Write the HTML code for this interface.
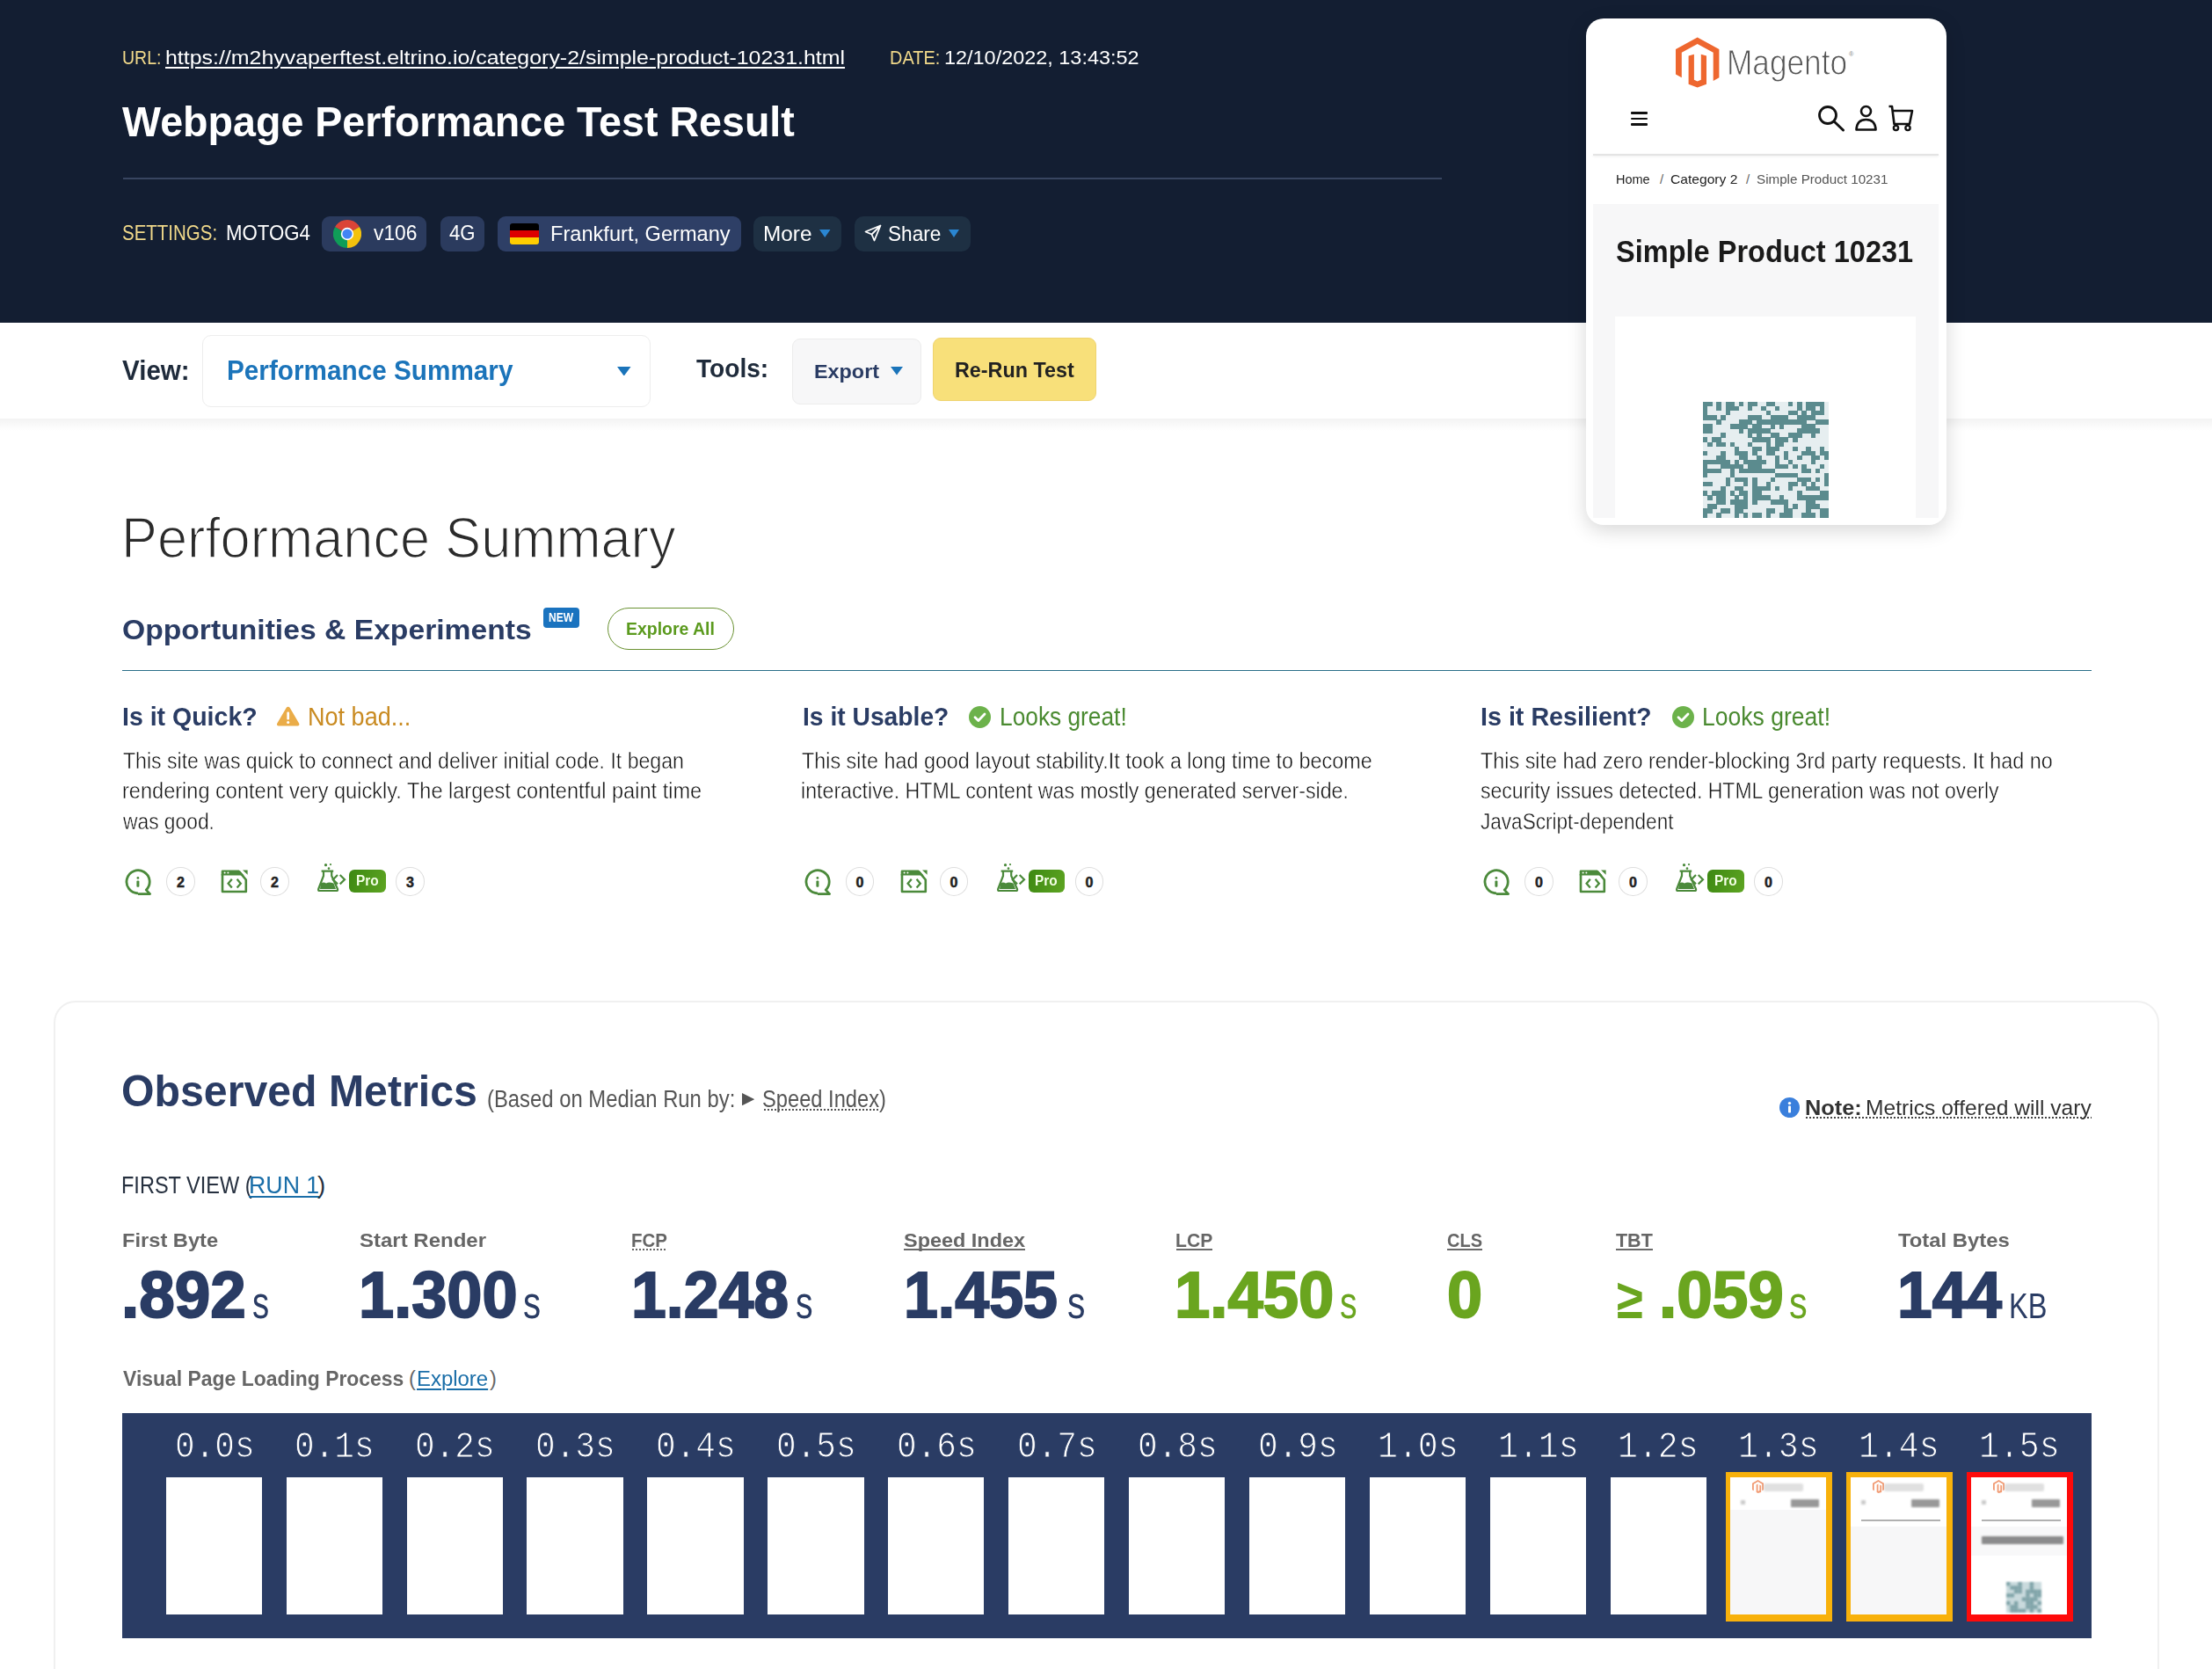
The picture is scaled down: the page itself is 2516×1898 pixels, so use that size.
<!DOCTYPE html>
<html><head><meta charset="utf-8"><title>WebPageTest Result</title>
<style>
html,body{margin:0;padding:0;}
body{width:2516px;height:1898px;overflow:hidden;position:relative;background:#fff;font-family:"Liberation Sans",sans-serif;}
.t{position:absolute;white-space:pre;line-height:1;transform-origin:0 0;}
.a{position:absolute;}
</style></head><body>
<div class="a" style="left:0.00px;top:0.00px;width:2516.00px;height:366.50px;background:#131e32;"></div>
<div class="a" style="left:139.50px;top:202.00px;width:1500.50px;height:2.00px;background:#384560;"></div>
<div class="a" style="left:366.00px;top:245.50px;width:118.50px;height:40.00px;background:#2b3b5e;border-radius:9px;"></div>
<div class="a" style="left:500.50px;top:245.50px;width:50.50px;height:40.00px;background:#2b3b5e;border-radius:9px;"></div>
<div class="a" style="left:565.50px;top:245.50px;width:277.50px;height:40.00px;background:#2e3f66;border-radius:9px;"></div>
<div class="a" style="left:857.00px;top:245.50px;width:100.00px;height:40.00px;background:#1e3043;border-radius:10px;"></div>
<div class="a" style="left:972.00px;top:245.50px;width:132.00px;height:40.00px;background:#1e3043;border-radius:10px;"></div>
<svg class="a" style="left:379px;top:250px" width="32" height="32" viewBox="0 0 32 32">
<path d="M16 16 L16 0 A16 16 0 0 1 29.86 8 Z" fill="#db4437"/>
<path d="M16 16 L29.86 8 A16 16 0 0 1 16 32 Z" fill="#f4c20d"/>
<path d="M16 16 L16 32 A16 16 0 0 1 2.14 8 Z" fill="#0f9d58"/>
<path d="M16 16 L2.14 8 A16 16 0 0 1 16 0 Z" fill="#db4437"/>
<circle cx="16" cy="16" r="7.2" fill="#fff"/><circle cx="16" cy="16" r="5.6" fill="#4285f4"/></svg>
<div class="a" style="left:580px;top:254px;width:33px;height:23.5px;border-radius:3px;overflow:hidden;background:linear-gradient(#000 0 33.3%,#dd0000 33.3% 66.6%,#ffce00 66.6%);"></div>
<svg class="a" style="left:932.00px;top:261.00px" width="12.50" height="9.00" viewBox="0 0 10 10" preserveAspectRatio="none"><path d="M0 0H10L5 10Z" fill="#2a86d2"/></svg>
<svg class="a" style="left:1079.00px;top:261.00px" width="12.00" height="9.00" viewBox="0 0 10 10" preserveAspectRatio="none"><path d="M0 0H10L5 10Z" fill="#2a86d2"/></svg>
<svg class="a" style="left:983px;top:255px" width="20" height="20" viewBox="0 0 20 20"><path d="M18.5 1.5 L1.5 8.5 L8.5 11.5 L11.5 18.5 Z M18.5 1.5 L8.5 11.5" fill="none" stroke="#fff" stroke-width="1.8" stroke-linejoin="round"/></svg>
<div class="a" style="left:0.00px;top:476.00px;width:2516.00px;height:14.00px;background:linear-gradient(#f3f3f3,#fff);"></div>
<div class="a" style="left:230.00px;top:380.70px;width:510.00px;height:82.30px;border:1.5px solid #ededed;border-radius:10px;box-sizing:border-box;"></div>
<svg class="a" style="left:702.00px;top:416.70px" width="15.50" height="10.60" viewBox="0 0 10 10" preserveAspectRatio="none"><path d="M0 0H10L5 10Z" fill="#1b74ba"/></svg>
<div class="a" style="left:901.00px;top:384.50px;width:147.00px;height:75.50px;background:#f7f7f8;border:1px solid #ececec;border-radius:9px;box-sizing:border-box;"></div>
<svg class="a" style="left:1013.00px;top:417.20px" width="14.00" height="9.50" viewBox="0 0 10 10" preserveAspectRatio="none"><path d="M0 0H10L5 10Z" fill="#1b74ba"/></svg>
<div class="a" style="left:1061.00px;top:384.00px;width:186.00px;height:72.00px;background:#f8e07a;border:1px solid #efd470;border-radius:9px;box-sizing:border-box;"></div>
<div class="a" style="left:1804.00px;top:21.00px;width:410.00px;height:575.50px;background:#fff;border-radius:20px;box-shadow:0 6px 22px rgba(0,0,0,0.16);"></div>
<div class="a" style="left:1812.00px;top:29.00px;width:394.00px;height:559.50px;background:#fff;border-radius:16px 16px 0 0;"></div>
<svg class="a" style="left:1905px;top:42px" width="51" height="58" viewBox="0 0 51 58">
<path d="M25.7 0.5 L50.4 14 V46.3 L43.7 50 V17.7 L25.7 8.1 L7.8 17.7 V46.3 L1 42.5 V14 Z" fill="#ee672f"/>
<path d="M15.6 21.5 L21.9 19.8 V48.8 L25.7 50.6 L29.8 48.8 V19.8 L36 21.5 V53.8 L25.7 57.4 L15.6 53.8 Z" fill="#ee672f"/>
</svg>
<div class="a" style="left:1854.60px;top:127.00px;width:19.90px;height:2.60px;background:#111;border-radius:1px;"></div>
<div class="a" style="left:1854.60px;top:133.50px;width:19.90px;height:2.60px;background:#111;border-radius:1px;"></div>
<div class="a" style="left:1854.60px;top:140.00px;width:19.90px;height:2.60px;background:#111;border-radius:1px;"></div>
<svg class="a" style="left:2066px;top:118px" width="116" height="32" viewBox="0 0 116 32">
<circle cx="13" cy="13" r="9.5" fill="none" stroke="#111" stroke-width="2.8"/><path d="M20 20 L30.5 30" stroke="#111" stroke-width="3" stroke-linecap="round"/>
<circle cx="56.5" cy="8.5" r="5.5" fill="none" stroke="#111" stroke-width="2.6"/><path d="M45.5 29.5 Q46 18 56.5 18 Q67 18 67.5 29.5 Z" fill="none" stroke="#111" stroke-width="2.6" stroke-linejoin="round"/>
<path d="M82.5 3 H86 L88.5 23 H106 L109 8 H87" fill="none" stroke="#111" stroke-width="2.6" stroke-linejoin="round"/><circle cx="90.5" cy="27.5" r="2.6" fill="none" stroke="#111" stroke-width="2.4"/><circle cx="104" cy="27.5" r="2.6" fill="none" stroke="#111" stroke-width="2.4"/>
</svg>
<div class="a" style="left:1812.00px;top:174.50px;width:393.00px;height:2.50px;background:#e4e4e4;box-shadow:0 1px 3px rgba(0,0,0,0.08);"></div>
<div class="a" style="left:1812.00px;top:232.00px;width:393.00px;height:356.50px;background:#f7f7f8;"></div>
<div class="a" style="left:1837.00px;top:360.00px;width:342.00px;height:228.50px;background:#fff;"></div>
<svg class="a" style="left:1937px;top:457px" width="143" height="131.5" viewBox="0 0 143 131.5" shape-rendering="crispEdges"><rect width="143" height="131.5" fill="#e6eef0"/><g fill="#5b8b8e"><rect x="0.00" y="0.00" width="5.41" height="5.36"/><rect x="5.11" y="0.00" width="5.41" height="5.36"/><rect x="15.32" y="0.00" width="5.41" height="5.36"/><rect x="25.54" y="0.00" width="5.41" height="5.36"/><rect x="30.64" y="0.00" width="5.41" height="5.36"/><rect x="40.86" y="0.00" width="5.41" height="5.36"/><rect x="51.07" y="0.00" width="5.41" height="5.36"/><rect x="56.18" y="0.00" width="5.41" height="5.36"/><rect x="71.50" y="0.00" width="5.41" height="5.36"/><rect x="76.61" y="0.00" width="5.41" height="5.36"/><rect x="97.04" y="0.00" width="5.41" height="5.36"/><rect x="107.25" y="0.00" width="5.41" height="5.36"/><rect x="117.46" y="0.00" width="5.41" height="5.36"/><rect x="122.57" y="0.00" width="5.41" height="5.36"/><rect x="127.68" y="0.00" width="5.41" height="5.36"/><rect x="132.79" y="0.00" width="5.41" height="5.36"/><rect x="0.00" y="5.06" width="5.41" height="5.36"/><rect x="15.32" y="5.06" width="5.41" height="5.36"/><rect x="25.54" y="5.06" width="5.41" height="5.36"/><rect x="30.64" y="5.06" width="5.41" height="5.36"/><rect x="35.75" y="5.06" width="5.41" height="5.36"/><rect x="51.07" y="5.06" width="5.41" height="5.36"/><rect x="66.39" y="5.06" width="5.41" height="5.36"/><rect x="81.71" y="5.06" width="5.41" height="5.36"/><rect x="107.25" y="5.06" width="5.41" height="5.36"/><rect x="117.46" y="5.06" width="5.41" height="5.36"/><rect x="122.57" y="5.06" width="5.41" height="5.36"/><rect x="132.79" y="5.06" width="5.41" height="5.36"/><rect x="0.00" y="10.12" width="5.41" height="5.36"/><rect x="25.54" y="10.12" width="5.41" height="5.36"/><rect x="71.50" y="10.12" width="5.41" height="5.36"/><rect x="97.04" y="10.12" width="5.41" height="5.36"/><rect x="102.14" y="10.12" width="5.41" height="5.36"/><rect x="112.36" y="10.12" width="5.41" height="5.36"/><rect x="122.57" y="10.12" width="5.41" height="5.36"/><rect x="127.68" y="10.12" width="5.41" height="5.36"/><rect x="132.79" y="10.12" width="5.41" height="5.36"/><rect x="0.00" y="15.17" width="5.41" height="5.36"/><rect x="5.11" y="15.17" width="5.41" height="5.36"/><rect x="10.21" y="15.17" width="5.41" height="5.36"/><rect x="20.43" y="15.17" width="5.41" height="5.36"/><rect x="51.07" y="15.17" width="5.41" height="5.36"/><rect x="56.18" y="15.17" width="5.41" height="5.36"/><rect x="61.29" y="15.17" width="5.41" height="5.36"/><rect x="76.61" y="15.17" width="5.41" height="5.36"/><rect x="81.71" y="15.17" width="5.41" height="5.36"/><rect x="86.82" y="15.17" width="5.41" height="5.36"/><rect x="91.93" y="15.17" width="5.41" height="5.36"/><rect x="107.25" y="15.17" width="5.41" height="5.36"/><rect x="112.36" y="15.17" width="5.41" height="5.36"/><rect x="117.46" y="15.17" width="5.41" height="5.36"/><rect x="122.57" y="15.17" width="5.41" height="5.36"/><rect x="15.32" y="20.23" width="5.41" height="5.36"/><rect x="40.86" y="20.23" width="5.41" height="5.36"/><rect x="45.96" y="20.23" width="5.41" height="5.36"/><rect x="51.07" y="20.23" width="5.41" height="5.36"/><rect x="61.29" y="20.23" width="5.41" height="5.36"/><rect x="66.39" y="20.23" width="5.41" height="5.36"/><rect x="71.50" y="20.23" width="5.41" height="5.36"/><rect x="76.61" y="20.23" width="5.41" height="5.36"/><rect x="81.71" y="20.23" width="5.41" height="5.36"/><rect x="86.82" y="20.23" width="5.41" height="5.36"/><rect x="91.93" y="20.23" width="5.41" height="5.36"/><rect x="97.04" y="20.23" width="5.41" height="5.36"/><rect x="102.14" y="20.23" width="5.41" height="5.36"/><rect x="107.25" y="20.23" width="5.41" height="5.36"/><rect x="112.36" y="20.23" width="5.41" height="5.36"/><rect x="127.68" y="20.23" width="5.41" height="5.36"/><rect x="132.79" y="20.23" width="5.41" height="5.36"/><rect x="137.89" y="20.23" width="5.41" height="5.36"/><rect x="0.00" y="25.29" width="5.41" height="5.36"/><rect x="5.11" y="25.29" width="5.41" height="5.36"/><rect x="30.64" y="25.29" width="5.41" height="5.36"/><rect x="35.75" y="25.29" width="5.41" height="5.36"/><rect x="40.86" y="25.29" width="5.41" height="5.36"/><rect x="45.96" y="25.29" width="5.41" height="5.36"/><rect x="56.18" y="25.29" width="5.41" height="5.36"/><rect x="61.29" y="25.29" width="5.41" height="5.36"/><rect x="76.61" y="25.29" width="5.41" height="5.36"/><rect x="86.82" y="25.29" width="5.41" height="5.36"/><rect x="112.36" y="25.29" width="5.41" height="5.36"/><rect x="117.46" y="25.29" width="5.41" height="5.36"/><rect x="122.57" y="25.29" width="5.41" height="5.36"/><rect x="0.00" y="30.35" width="5.41" height="5.36"/><rect x="5.11" y="30.35" width="5.41" height="5.36"/><rect x="40.86" y="30.35" width="5.41" height="5.36"/><rect x="51.07" y="30.35" width="5.41" height="5.36"/><rect x="56.18" y="30.35" width="5.41" height="5.36"/><rect x="61.29" y="30.35" width="5.41" height="5.36"/><rect x="66.39" y="30.35" width="5.41" height="5.36"/><rect x="71.50" y="30.35" width="5.41" height="5.36"/><rect x="107.25" y="30.35" width="5.41" height="5.36"/><rect x="112.36" y="30.35" width="5.41" height="5.36"/><rect x="117.46" y="30.35" width="5.41" height="5.36"/><rect x="122.57" y="30.35" width="5.41" height="5.36"/><rect x="127.68" y="30.35" width="5.41" height="5.36"/><rect x="20.43" y="35.40" width="5.41" height="5.36"/><rect x="51.07" y="35.40" width="5.41" height="5.36"/><rect x="61.29" y="35.40" width="5.41" height="5.36"/><rect x="76.61" y="35.40" width="5.41" height="5.36"/><rect x="81.71" y="35.40" width="5.41" height="5.36"/><rect x="97.04" y="35.40" width="5.41" height="5.36"/><rect x="102.14" y="35.40" width="5.41" height="5.36"/><rect x="107.25" y="35.40" width="5.41" height="5.36"/><rect x="122.57" y="35.40" width="5.41" height="5.36"/><rect x="0.00" y="40.46" width="5.41" height="5.36"/><rect x="10.21" y="40.46" width="5.41" height="5.36"/><rect x="15.32" y="40.46" width="5.41" height="5.36"/><rect x="56.18" y="40.46" width="5.41" height="5.36"/><rect x="61.29" y="40.46" width="5.41" height="5.36"/><rect x="66.39" y="40.46" width="5.41" height="5.36"/><rect x="71.50" y="40.46" width="5.41" height="5.36"/><rect x="81.71" y="40.46" width="5.41" height="5.36"/><rect x="86.82" y="40.46" width="5.41" height="5.36"/><rect x="91.93" y="40.46" width="5.41" height="5.36"/><rect x="102.14" y="40.46" width="5.41" height="5.36"/><rect x="5.11" y="45.52" width="5.41" height="5.36"/><rect x="15.32" y="45.52" width="5.41" height="5.36"/><rect x="20.43" y="45.52" width="5.41" height="5.36"/><rect x="30.64" y="45.52" width="5.41" height="5.36"/><rect x="51.07" y="45.52" width="5.41" height="5.36"/><rect x="71.50" y="45.52" width="5.41" height="5.36"/><rect x="81.71" y="45.52" width="5.41" height="5.36"/><rect x="86.82" y="45.52" width="5.41" height="5.36"/><rect x="35.75" y="50.58" width="5.41" height="5.36"/><rect x="56.18" y="50.58" width="5.41" height="5.36"/><rect x="61.29" y="50.58" width="5.41" height="5.36"/><rect x="71.50" y="50.58" width="5.41" height="5.36"/><rect x="76.61" y="50.58" width="5.41" height="5.36"/><rect x="81.71" y="50.58" width="5.41" height="5.36"/><rect x="102.14" y="50.58" width="5.41" height="5.36"/><rect x="117.46" y="50.58" width="5.41" height="5.36"/><rect x="132.79" y="50.58" width="5.41" height="5.36"/><rect x="0.00" y="55.63" width="5.41" height="5.36"/><rect x="20.43" y="55.63" width="5.41" height="5.36"/><rect x="35.75" y="55.63" width="5.41" height="5.36"/><rect x="40.86" y="55.63" width="5.41" height="5.36"/><rect x="45.96" y="55.63" width="5.41" height="5.36"/><rect x="56.18" y="55.63" width="5.41" height="5.36"/><rect x="71.50" y="55.63" width="5.41" height="5.36"/><rect x="76.61" y="55.63" width="5.41" height="5.36"/><rect x="91.93" y="55.63" width="5.41" height="5.36"/><rect x="112.36" y="55.63" width="5.41" height="5.36"/><rect x="117.46" y="55.63" width="5.41" height="5.36"/><rect x="122.57" y="55.63" width="5.41" height="5.36"/><rect x="132.79" y="55.63" width="5.41" height="5.36"/><rect x="137.89" y="55.63" width="5.41" height="5.36"/><rect x="15.32" y="60.69" width="5.41" height="5.36"/><rect x="20.43" y="60.69" width="5.41" height="5.36"/><rect x="40.86" y="60.69" width="5.41" height="5.36"/><rect x="45.96" y="60.69" width="5.41" height="5.36"/><rect x="61.29" y="60.69" width="5.41" height="5.36"/><rect x="81.71" y="60.69" width="5.41" height="5.36"/><rect x="91.93" y="60.69" width="5.41" height="5.36"/><rect x="107.25" y="60.69" width="5.41" height="5.36"/><rect x="122.57" y="60.69" width="5.41" height="5.36"/><rect x="127.68" y="60.69" width="5.41" height="5.36"/><rect x="137.89" y="60.69" width="5.41" height="5.36"/><rect x="0.00" y="65.75" width="5.41" height="5.36"/><rect x="5.11" y="65.75" width="5.41" height="5.36"/><rect x="10.21" y="65.75" width="5.41" height="5.36"/><rect x="15.32" y="65.75" width="5.41" height="5.36"/><rect x="20.43" y="65.75" width="5.41" height="5.36"/><rect x="25.54" y="65.75" width="5.41" height="5.36"/><rect x="35.75" y="65.75" width="5.41" height="5.36"/><rect x="45.96" y="65.75" width="5.41" height="5.36"/><rect x="51.07" y="65.75" width="5.41" height="5.36"/><rect x="56.18" y="65.75" width="5.41" height="5.36"/><rect x="61.29" y="65.75" width="5.41" height="5.36"/><rect x="66.39" y="65.75" width="5.41" height="5.36"/><rect x="81.71" y="65.75" width="5.41" height="5.36"/><rect x="97.04" y="65.75" width="5.41" height="5.36"/><rect x="122.57" y="65.75" width="5.41" height="5.36"/><rect x="0.00" y="70.81" width="5.41" height="5.36"/><rect x="20.43" y="70.81" width="5.41" height="5.36"/><rect x="25.54" y="70.81" width="5.41" height="5.36"/><rect x="30.64" y="70.81" width="5.41" height="5.36"/><rect x="35.75" y="70.81" width="5.41" height="5.36"/><rect x="40.86" y="70.81" width="5.41" height="5.36"/><rect x="51.07" y="70.81" width="5.41" height="5.36"/><rect x="56.18" y="70.81" width="5.41" height="5.36"/><rect x="61.29" y="70.81" width="5.41" height="5.36"/><rect x="81.71" y="70.81" width="5.41" height="5.36"/><rect x="86.82" y="70.81" width="5.41" height="5.36"/><rect x="91.93" y="70.81" width="5.41" height="5.36"/><rect x="102.14" y="70.81" width="5.41" height="5.36"/><rect x="112.36" y="70.81" width="5.41" height="5.36"/><rect x="132.79" y="70.81" width="5.41" height="5.36"/><rect x="0.00" y="75.87" width="5.41" height="5.36"/><rect x="5.11" y="75.87" width="5.41" height="5.36"/><rect x="10.21" y="75.87" width="5.41" height="5.36"/><rect x="15.32" y="75.87" width="5.41" height="5.36"/><rect x="30.64" y="75.87" width="5.41" height="5.36"/><rect x="40.86" y="75.87" width="5.41" height="5.36"/><rect x="45.96" y="75.87" width="5.41" height="5.36"/><rect x="51.07" y="75.87" width="5.41" height="5.36"/><rect x="56.18" y="75.87" width="5.41" height="5.36"/><rect x="61.29" y="75.87" width="5.41" height="5.36"/><rect x="66.39" y="75.87" width="5.41" height="5.36"/><rect x="71.50" y="75.87" width="5.41" height="5.36"/><rect x="76.61" y="75.87" width="5.41" height="5.36"/><rect x="112.36" y="75.87" width="5.41" height="5.36"/><rect x="117.46" y="75.87" width="5.41" height="5.36"/><rect x="127.68" y="75.87" width="5.41" height="5.36"/><rect x="0.00" y="80.92" width="5.41" height="5.36"/><rect x="30.64" y="80.92" width="5.41" height="5.36"/><rect x="81.71" y="80.92" width="5.41" height="5.36"/><rect x="86.82" y="80.92" width="5.41" height="5.36"/><rect x="91.93" y="80.92" width="5.41" height="5.36"/><rect x="97.04" y="80.92" width="5.41" height="5.36"/><rect x="102.14" y="80.92" width="5.41" height="5.36"/><rect x="137.89" y="80.92" width="5.41" height="5.36"/><rect x="25.54" y="85.98" width="5.41" height="5.36"/><rect x="35.75" y="85.98" width="5.41" height="5.36"/><rect x="40.86" y="85.98" width="5.41" height="5.36"/><rect x="45.96" y="85.98" width="5.41" height="5.36"/><rect x="56.18" y="85.98" width="5.41" height="5.36"/><rect x="76.61" y="85.98" width="5.41" height="5.36"/><rect x="107.25" y="85.98" width="5.41" height="5.36"/><rect x="112.36" y="85.98" width="5.41" height="5.36"/><rect x="117.46" y="85.98" width="5.41" height="5.36"/><rect x="127.68" y="85.98" width="5.41" height="5.36"/><rect x="137.89" y="85.98" width="5.41" height="5.36"/><rect x="0.00" y="91.04" width="5.41" height="5.36"/><rect x="5.11" y="91.04" width="5.41" height="5.36"/><rect x="25.54" y="91.04" width="5.41" height="5.36"/><rect x="45.96" y="91.04" width="5.41" height="5.36"/><rect x="56.18" y="91.04" width="5.41" height="5.36"/><rect x="71.50" y="91.04" width="5.41" height="5.36"/><rect x="97.04" y="91.04" width="5.41" height="5.36"/><rect x="102.14" y="91.04" width="5.41" height="5.36"/><rect x="112.36" y="91.04" width="5.41" height="5.36"/><rect x="122.57" y="91.04" width="5.41" height="5.36"/><rect x="137.89" y="91.04" width="5.41" height="5.36"/><rect x="20.43" y="96.10" width="5.41" height="5.36"/><rect x="35.75" y="96.10" width="5.41" height="5.36"/><rect x="40.86" y="96.10" width="5.41" height="5.36"/><rect x="56.18" y="96.10" width="5.41" height="5.36"/><rect x="61.29" y="96.10" width="5.41" height="5.36"/><rect x="66.39" y="96.10" width="5.41" height="5.36"/><rect x="71.50" y="96.10" width="5.41" height="5.36"/><rect x="81.71" y="96.10" width="5.41" height="5.36"/><rect x="97.04" y="96.10" width="5.41" height="5.36"/><rect x="117.46" y="96.10" width="5.41" height="5.36"/><rect x="122.57" y="96.10" width="5.41" height="5.36"/><rect x="127.68" y="96.10" width="5.41" height="5.36"/><rect x="0.00" y="101.15" width="5.41" height="5.36"/><rect x="10.21" y="101.15" width="5.41" height="5.36"/><rect x="15.32" y="101.15" width="5.41" height="5.36"/><rect x="20.43" y="101.15" width="5.41" height="5.36"/><rect x="30.64" y="101.15" width="5.41" height="5.36"/><rect x="40.86" y="101.15" width="5.41" height="5.36"/><rect x="45.96" y="101.15" width="5.41" height="5.36"/><rect x="56.18" y="101.15" width="5.41" height="5.36"/><rect x="61.29" y="101.15" width="5.41" height="5.36"/><rect x="107.25" y="101.15" width="5.41" height="5.36"/><rect x="132.79" y="101.15" width="5.41" height="5.36"/><rect x="137.89" y="101.15" width="5.41" height="5.36"/><rect x="5.11" y="106.21" width="5.41" height="5.36"/><rect x="15.32" y="106.21" width="5.41" height="5.36"/><rect x="20.43" y="106.21" width="5.41" height="5.36"/><rect x="35.75" y="106.21" width="5.41" height="5.36"/><rect x="45.96" y="106.21" width="5.41" height="5.36"/><rect x="56.18" y="106.21" width="5.41" height="5.36"/><rect x="61.29" y="106.21" width="5.41" height="5.36"/><rect x="66.39" y="106.21" width="5.41" height="5.36"/><rect x="71.50" y="106.21" width="5.41" height="5.36"/><rect x="86.82" y="106.21" width="5.41" height="5.36"/><rect x="107.25" y="106.21" width="5.41" height="5.36"/><rect x="112.36" y="106.21" width="5.41" height="5.36"/><rect x="117.46" y="106.21" width="5.41" height="5.36"/><rect x="122.57" y="106.21" width="5.41" height="5.36"/><rect x="127.68" y="106.21" width="5.41" height="5.36"/><rect x="132.79" y="106.21" width="5.41" height="5.36"/><rect x="137.89" y="106.21" width="5.41" height="5.36"/><rect x="15.32" y="111.27" width="5.41" height="5.36"/><rect x="20.43" y="111.27" width="5.41" height="5.36"/><rect x="30.64" y="111.27" width="5.41" height="5.36"/><rect x="35.75" y="111.27" width="5.41" height="5.36"/><rect x="40.86" y="111.27" width="5.41" height="5.36"/><rect x="45.96" y="111.27" width="5.41" height="5.36"/><rect x="56.18" y="111.27" width="5.41" height="5.36"/><rect x="76.61" y="111.27" width="5.41" height="5.36"/><rect x="81.71" y="111.27" width="5.41" height="5.36"/><rect x="86.82" y="111.27" width="5.41" height="5.36"/><rect x="91.93" y="111.27" width="5.41" height="5.36"/><rect x="117.46" y="111.27" width="5.41" height="5.36"/><rect x="122.57" y="111.27" width="5.41" height="5.36"/><rect x="5.11" y="116.33" width="5.41" height="5.36"/><rect x="10.21" y="116.33" width="5.41" height="5.36"/><rect x="35.75" y="116.33" width="5.41" height="5.36"/><rect x="40.86" y="116.33" width="5.41" height="5.36"/><rect x="45.96" y="116.33" width="5.41" height="5.36"/><rect x="91.93" y="116.33" width="5.41" height="5.36"/><rect x="102.14" y="116.33" width="5.41" height="5.36"/><rect x="117.46" y="116.33" width="5.41" height="5.36"/><rect x="122.57" y="116.33" width="5.41" height="5.36"/><rect x="127.68" y="116.33" width="5.41" height="5.36"/><rect x="0.00" y="121.38" width="5.41" height="5.36"/><rect x="5.11" y="121.38" width="5.41" height="5.36"/><rect x="20.43" y="121.38" width="5.41" height="5.36"/><rect x="25.54" y="121.38" width="5.41" height="5.36"/><rect x="35.75" y="121.38" width="5.41" height="5.36"/><rect x="40.86" y="121.38" width="5.41" height="5.36"/><rect x="71.50" y="121.38" width="5.41" height="5.36"/><rect x="76.61" y="121.38" width="5.41" height="5.36"/><rect x="91.93" y="121.38" width="5.41" height="5.36"/><rect x="97.04" y="121.38" width="5.41" height="5.36"/><rect x="117.46" y="121.38" width="5.41" height="5.36"/><rect x="132.79" y="121.38" width="5.41" height="5.36"/><rect x="137.89" y="121.38" width="5.41" height="5.36"/><rect x="0.00" y="126.44" width="5.41" height="5.36"/><rect x="15.32" y="126.44" width="5.41" height="5.36"/><rect x="35.75" y="126.44" width="5.41" height="5.36"/><rect x="45.96" y="126.44" width="5.41" height="5.36"/><rect x="56.18" y="126.44" width="5.41" height="5.36"/><rect x="61.29" y="126.44" width="5.41" height="5.36"/><rect x="71.50" y="126.44" width="5.41" height="5.36"/><rect x="86.82" y="126.44" width="5.41" height="5.36"/><rect x="91.93" y="126.44" width="5.41" height="5.36"/><rect x="97.04" y="126.44" width="5.41" height="5.36"/><rect x="112.36" y="126.44" width="5.41" height="5.36"/><rect x="117.46" y="126.44" width="5.41" height="5.36"/><rect x="122.57" y="126.44" width="5.41" height="5.36"/><rect x="132.79" y="126.44" width="5.41" height="5.36"/><rect x="137.89" y="126.44" width="5.41" height="5.36"/></g></svg>
<div class="a" style="left:618.00px;top:691.00px;width:41.00px;height:22.60px;background:#1a73bf;border-radius:4px;"></div>
<div class="a" style="left:691.00px;top:691.00px;width:143.60px;height:47.60px;border:1.5px solid #6a9232;border-radius:24px;box-sizing:border-box;"></div>
<div class="a" style="left:139.00px;top:761.60px;width:2240.00px;height:1.60px;background:#2b6f89;"></div>
<svg class="a" style="left:313.6px;top:802px" width="27.4" height="25" viewBox="0 0 28 25"><path d="M14 1.5 Q15.5 1.5 16.3 3 L26.8 21 Q27.6 23.5 25 23.8 H3 Q0.4 23.5 1.2 21 L11.7 3 Q12.5 1.5 14 1.5Z" fill="#eaac48"/><rect x="12.6" y="7.5" width="2.8" height="9" rx="1.2" fill="#fff"/><circle cx="14" cy="19.6" r="1.6" fill="#fff"/></svg>
<svg class="a" style="left:1101.50px;top:802.50px" width="25" height="25" viewBox="0 0 25 25"><circle cx="12.5" cy="12.5" r="12.5" fill="#6cb24b"/><path d="M7 12.8 L10.8 16.5 L18 9" fill="none" stroke="#fff" stroke-width="2.8" stroke-linecap="round" stroke-linejoin="round"/></svg>
<svg class="a" style="left:1901.70px;top:802.50px" width="25" height="25" viewBox="0 0 25 25"><circle cx="12.5" cy="12.5" r="12.5" fill="#6cb24b"/><path d="M7 12.8 L10.8 16.5 L18 9" fill="none" stroke="#fff" stroke-width="2.8" stroke-linecap="round" stroke-linejoin="round"/></svg>
<svg class="a" style="left:141.00px;top:987px" width="32" height="32" viewBox="0 0 32 32"><path d="M16 28.9 A13.1 13.1 0 1 1 25.3 25.1 L29.6 29.6 H16" fill="none" stroke="#4b8a3b" stroke-width="2.8" stroke-linejoin="round"/><circle cx="15.9" cy="11.4" r="1.4" fill="#4b8a3b"/><rect x="14.4" y="14.4" width="3" height="7.4" rx="1" fill="#4b8a3b"/></svg>
<svg class="a" style="left:251.00px;top:989px" width="31" height="27" viewBox="0 0 31 27"><path d="M0.7 1.7 Q0.7 0.5 1.9 0.5 H20.8 L26.6 6.5 H0.7 Z" fill="#4b8a3b"/><path d="M2 5 V25 H28.8 V11.5 L20.8 1.8" fill="none" stroke="#4b8a3b" stroke-width="2.6" stroke-linejoin="round"/><path d="M25 0.6 H30.6 V5.8 Z" fill="#4b8a3b"/><circle cx="4.6" cy="3.5" r="1" fill="#fff"/><circle cx="8.4" cy="3.5" r="1" fill="#fff"/><path d="M12.8 10.8 L8.6 15.7 L12.8 20.6 M18.6 10.8 L22.8 15.7 L18.6 20.6" fill="none" stroke="#4b8a3b" stroke-width="2.3"/></svg>
<svg class="a" style="left:360.00px;top:981px" width="34" height="34" viewBox="0 0 34 34"><circle cx="10.5" cy="2.7" r="1.6" fill="#4b8a3b"/><circle cx="16" cy="2.1" r="1.1" fill="#4b8a3b"/><circle cx="14" cy="6.6" r="1.3" fill="#4b8a3b"/><path d="M5.6 9.6 H19.2 M8 9.6 V15 L2.2 30 Q1.6 32 3.6 32 H22.6 Q24.6 32 24 30 L17.2 15 V9.6" fill="none" stroke="#4b8a3b" stroke-width="2.2" stroke-linejoin="round"/><path d="M5 23.5 Q8 21.5 11 23.5 Q14 21.5 19.5 23.5 L22 30 H4 Z" fill="#4b8a3b"/><path d="M24 14 L18.8 19.2 L24 24.4 M26.7 14 L32 19.2 L26.7 24.4" fill="none" stroke="#4b8a3b" stroke-width="2.2"/></svg>
<div class="a" style="left:397.30px;top:989.20px;width:41.30px;height:26.30px;background:linear-gradient(110deg,#3c8812,#5ea522);border-radius:6px;"></div>
<div class="a" style="left:189.40px;top:986.00px;width:32.30px;height:32.50px;border:1.2px solid #dedede;border-radius:50%;box-sizing:border-box;background:#fff;"></div>
<div class="a" style="left:296.40px;top:986.00px;width:32.30px;height:32.50px;border:1.2px solid #dedede;border-radius:50%;box-sizing:border-box;background:#fff;"></div>
<div class="a" style="left:450.30px;top:986.00px;width:32.30px;height:32.50px;border:1.2px solid #dedede;border-radius:50%;box-sizing:border-box;background:#fff;"></div>
<svg class="a" style="left:913.50px;top:987px" width="32" height="32" viewBox="0 0 32 32"><path d="M16 28.9 A13.1 13.1 0 1 1 25.3 25.1 L29.6 29.6 H16" fill="none" stroke="#4b8a3b" stroke-width="2.8" stroke-linejoin="round"/><circle cx="15.9" cy="11.4" r="1.4" fill="#4b8a3b"/><rect x="14.4" y="14.4" width="3" height="7.4" rx="1" fill="#4b8a3b"/></svg>
<svg class="a" style="left:1023.50px;top:989px" width="31" height="27" viewBox="0 0 31 27"><path d="M0.7 1.7 Q0.7 0.5 1.9 0.5 H20.8 L26.6 6.5 H0.7 Z" fill="#4b8a3b"/><path d="M2 5 V25 H28.8 V11.5 L20.8 1.8" fill="none" stroke="#4b8a3b" stroke-width="2.6" stroke-linejoin="round"/><path d="M25 0.6 H30.6 V5.8 Z" fill="#4b8a3b"/><circle cx="4.6" cy="3.5" r="1" fill="#fff"/><circle cx="8.4" cy="3.5" r="1" fill="#fff"/><path d="M12.8 10.8 L8.6 15.7 L12.8 20.6 M18.6 10.8 L22.8 15.7 L18.6 20.6" fill="none" stroke="#4b8a3b" stroke-width="2.3"/></svg>
<svg class="a" style="left:1132.50px;top:981px" width="34" height="34" viewBox="0 0 34 34"><circle cx="10.5" cy="2.7" r="1.6" fill="#4b8a3b"/><circle cx="16" cy="2.1" r="1.1" fill="#4b8a3b"/><circle cx="14" cy="6.6" r="1.3" fill="#4b8a3b"/><path d="M5.6 9.6 H19.2 M8 9.6 V15 L2.2 30 Q1.6 32 3.6 32 H22.6 Q24.6 32 24 30 L17.2 15 V9.6" fill="none" stroke="#4b8a3b" stroke-width="2.2" stroke-linejoin="round"/><path d="M5 23.5 Q8 21.5 11 23.5 Q14 21.5 19.5 23.5 L22 30 H4 Z" fill="#4b8a3b"/><path d="M24 14 L18.8 19.2 L24 24.4 M26.7 14 L32 19.2 L26.7 24.4" fill="none" stroke="#4b8a3b" stroke-width="2.2"/></svg>
<div class="a" style="left:1169.80px;top:989.20px;width:41.30px;height:26.30px;background:linear-gradient(110deg,#3c8812,#5ea522);border-radius:6px;"></div>
<div class="a" style="left:961.90px;top:986.00px;width:32.30px;height:32.50px;border:1.2px solid #dedede;border-radius:50%;box-sizing:border-box;background:#fff;"></div>
<div class="a" style="left:1068.90px;top:986.00px;width:32.30px;height:32.50px;border:1.2px solid #dedede;border-radius:50%;box-sizing:border-box;background:#fff;"></div>
<div class="a" style="left:1222.80px;top:986.00px;width:32.30px;height:32.50px;border:1.2px solid #dedede;border-radius:50%;box-sizing:border-box;background:#fff;"></div>
<svg class="a" style="left:1686.00px;top:987px" width="32" height="32" viewBox="0 0 32 32"><path d="M16 28.9 A13.1 13.1 0 1 1 25.3 25.1 L29.6 29.6 H16" fill="none" stroke="#4b8a3b" stroke-width="2.8" stroke-linejoin="round"/><circle cx="15.9" cy="11.4" r="1.4" fill="#4b8a3b"/><rect x="14.4" y="14.4" width="3" height="7.4" rx="1" fill="#4b8a3b"/></svg>
<svg class="a" style="left:1796.00px;top:989px" width="31" height="27" viewBox="0 0 31 27"><path d="M0.7 1.7 Q0.7 0.5 1.9 0.5 H20.8 L26.6 6.5 H0.7 Z" fill="#4b8a3b"/><path d="M2 5 V25 H28.8 V11.5 L20.8 1.8" fill="none" stroke="#4b8a3b" stroke-width="2.6" stroke-linejoin="round"/><path d="M25 0.6 H30.6 V5.8 Z" fill="#4b8a3b"/><circle cx="4.6" cy="3.5" r="1" fill="#fff"/><circle cx="8.4" cy="3.5" r="1" fill="#fff"/><path d="M12.8 10.8 L8.6 15.7 L12.8 20.6 M18.6 10.8 L22.8 15.7 L18.6 20.6" fill="none" stroke="#4b8a3b" stroke-width="2.3"/></svg>
<svg class="a" style="left:1905.00px;top:981px" width="34" height="34" viewBox="0 0 34 34"><circle cx="10.5" cy="2.7" r="1.6" fill="#4b8a3b"/><circle cx="16" cy="2.1" r="1.1" fill="#4b8a3b"/><circle cx="14" cy="6.6" r="1.3" fill="#4b8a3b"/><path d="M5.6 9.6 H19.2 M8 9.6 V15 L2.2 30 Q1.6 32 3.6 32 H22.6 Q24.6 32 24 30 L17.2 15 V9.6" fill="none" stroke="#4b8a3b" stroke-width="2.2" stroke-linejoin="round"/><path d="M5 23.5 Q8 21.5 11 23.5 Q14 21.5 19.5 23.5 L22 30 H4 Z" fill="#4b8a3b"/><path d="M24 14 L18.8 19.2 L24 24.4 M26.7 14 L32 19.2 L26.7 24.4" fill="none" stroke="#4b8a3b" stroke-width="2.2"/></svg>
<div class="a" style="left:1942.30px;top:989.20px;width:41.30px;height:26.30px;background:linear-gradient(110deg,#3c8812,#5ea522);border-radius:6px;"></div>
<div class="a" style="left:1734.40px;top:986.00px;width:32.30px;height:32.50px;border:1.2px solid #dedede;border-radius:50%;box-sizing:border-box;background:#fff;"></div>
<div class="a" style="left:1841.40px;top:986.00px;width:32.30px;height:32.50px;border:1.2px solid #dedede;border-radius:50%;box-sizing:border-box;background:#fff;"></div>
<div class="a" style="left:1995.30px;top:986.00px;width:32.30px;height:32.50px;border:1.2px solid #dedede;border-radius:50%;box-sizing:border-box;background:#fff;"></div>
<div class="a" style="left:61.00px;top:1137.80px;width:2395.00px;height:822.20px;border:2px solid #f0f0f0;border-radius:25px;box-sizing:border-box;"></div>
<svg class="a" style="left:2023.5px;top:1248.4px" width="23" height="23" viewBox="0 0 23 23"><circle cx="11.5" cy="11.5" r="11.5" fill="#3a7fdc"/><circle cx="11.5" cy="6.6" r="1.7" fill="#fff"/><rect x="10" y="9.6" width="3" height="8" rx="0.8" fill="#fff"/></svg>
<div class="a" style="left:2054.00px;top:1269.50px;width:324.80px;height:2.00px;background-image:linear-gradient(90deg,#444 50%,transparent 50%);background-size:4px 2px;"></div>
<svg class="a" style="left:844px;top:1242.7px" width="14.3" height="14.3" viewBox="0 0 10 10" preserveAspectRatio="none"><path d="M0 0L10 5L0 10Z" fill="#555"/></svg>
<div class="a" style="left:868.50px;top:1261.00px;width:130.50px;height:2.00px;background-image:linear-gradient(90deg,#555 50%,transparent 50%);background-size:4px 2px;"></div>
<div class="a" style="left:718.75px;top:1420.00px;width:40.00px;height:2.00px;background-image:linear-gradient(90deg,#666 50%,transparent 50%);background-size:4px 2px;"></div>
<div class="a" style="left:1027.50px;top:1420.00px;width:138.50px;height:2.00px;background:#6a6a6a;"></div>
<div class="a" style="left:1337.50px;top:1420.00px;width:41.25px;height:2.00px;background:#6a6a6a;"></div>
<div class="a" style="left:1646.00px;top:1420.00px;width:40.00px;height:2.00px;background:#6a6a6a;"></div>
<div class="a" style="left:1838.00px;top:1420.00px;width:42.00px;height:2.00px;background:#6a6a6a;"></div>
<div class="a" style="left:139.25px;top:1607.00px;width:2239.25px;height:256.40px;background:#2a3c64;"></div>
<div class="a" style="left:188.75px;top:1679.50px;width:109.30px;height:156.00px;background:#fff;"></div>
<div class="a" style="left:325.65px;top:1679.50px;width:109.30px;height:156.00px;background:#fff;"></div>
<div class="a" style="left:462.55px;top:1679.50px;width:109.30px;height:156.00px;background:#fff;"></div>
<div class="a" style="left:599.45px;top:1679.50px;width:109.30px;height:156.00px;background:#fff;"></div>
<div class="a" style="left:736.35px;top:1679.50px;width:109.30px;height:156.00px;background:#fff;"></div>
<div class="a" style="left:873.25px;top:1679.50px;width:109.30px;height:156.00px;background:#fff;"></div>
<div class="a" style="left:1010.15px;top:1679.50px;width:109.30px;height:156.00px;background:#fff;"></div>
<div class="a" style="left:1147.05px;top:1679.50px;width:109.30px;height:156.00px;background:#fff;"></div>
<div class="a" style="left:1283.95px;top:1679.50px;width:109.30px;height:156.00px;background:#fff;"></div>
<div class="a" style="left:1420.85px;top:1679.50px;width:109.30px;height:156.00px;background:#fff;"></div>
<div class="a" style="left:1557.75px;top:1679.50px;width:109.30px;height:156.00px;background:#fff;"></div>
<div class="a" style="left:1694.65px;top:1679.50px;width:109.30px;height:156.00px;background:#fff;"></div>
<div class="a" style="left:1831.55px;top:1679.50px;width:109.30px;height:156.00px;background:#fff;"></div>
<div class="a" style="left:1962.95px;top:1673.50px;width:120.80px;height:170.00px;background:#f8b10b;"></div>
<div class="a" style="left:1968.45px;top:1680.00px;width:109.00px;height:156.00px;background:linear-gradient(#fff 0 24%,#f7f7f8 24%);"></div>
<svg class="a" style="left:1992.95px;top:1682px;filter:blur(.6px);opacity:.85" width="13" height="17" viewBox="0 0 50 58"><path d="M25 0 L50 14.5 V43.5 L43 47.5 V18.5 L25 8 L7 18.5 V47.5 L0 43.5 V14.5 Z M25 58 L18 54 V21 L25 17 V50 L32 46 V21 L39 25 V54 Z" fill="#ef8a5c"/></svg>
<div class="a" style="left:2006.45px;top:1687px;width:45px;height:9px;background:#bbb;opacity:.45;border-radius:2px;filter:blur(1px)"></div>
<div class="a" style="left:1979.95px;top:1706px;width:5px;height:5px;background:#999;opacity:.5;filter:blur(.8px)"></div>
<div class="a" style="left:2037.45px;top:1705px;width:32px;height:8.5px;background:#555;opacity:.6;border-radius:1px;filter:blur(.8px)"></div>
<div class="a" style="left:2099.85px;top:1673.50px;width:120.80px;height:170.00px;background:#f8b10b;"></div>
<div class="a" style="left:2105.35px;top:1680.00px;width:109.00px;height:156.00px;background:linear-gradient(#fff 0 36%,#f7f7f8 36%);"></div>
<svg class="a" style="left:2129.85px;top:1682px;filter:blur(.6px);opacity:.85" width="13" height="17" viewBox="0 0 50 58"><path d="M25 0 L50 14.5 V43.5 L43 47.5 V18.5 L25 8 L7 18.5 V47.5 L0 43.5 V14.5 Z M25 58 L18 54 V21 L25 17 V50 L32 46 V21 L39 25 V54 Z" fill="#ef8a5c"/></svg>
<div class="a" style="left:2143.35px;top:1687px;width:45px;height:9px;background:#bbb;opacity:.45;border-radius:2px;filter:blur(1px)"></div>
<div class="a" style="left:2116.85px;top:1706px;width:5px;height:5px;background:#999;opacity:.5;filter:blur(.8px)"></div>
<div class="a" style="left:2174.35px;top:1705px;width:32px;height:8.5px;background:#555;opacity:.6;border-radius:1px;filter:blur(.8px)"></div>
<div class="a" style="left:2116.85px;top:1727.5px;width:90px;height:2.2px;background:#666;opacity:.5;filter:blur(.5px)"></div>
<div class="a" style="left:2236.75px;top:1673.50px;width:120.80px;height:170.00px;background:#fe0a0a;"></div>
<div class="a" style="left:2242.25px;top:1680.00px;width:109.00px;height:156.00px;background:linear-gradient(#fff 0 36%,#f8f8f9 36% 57%,#fff 57%);"></div>
<svg class="a" style="left:2266.75px;top:1682px;filter:blur(.6px);opacity:.85" width="13" height="17" viewBox="0 0 50 58"><path d="M25 0 L50 14.5 V43.5 L43 47.5 V18.5 L25 8 L7 18.5 V47.5 L0 43.5 V14.5 Z M25 58 L18 54 V21 L25 17 V50 L32 46 V21 L39 25 V54 Z" fill="#ef8a5c"/></svg>
<div class="a" style="left:2280.25px;top:1687px;width:45px;height:9px;background:#bbb;opacity:.45;border-radius:2px;filter:blur(1px)"></div>
<div class="a" style="left:2253.75px;top:1706px;width:5px;height:5px;background:#999;opacity:.5;filter:blur(.8px)"></div>
<div class="a" style="left:2311.25px;top:1705px;width:32px;height:8.5px;background:#555;opacity:.6;border-radius:1px;filter:blur(.8px)"></div>
<div class="a" style="left:2253.75px;top:1727.5px;width:90px;height:2.2px;background:#666;opacity:.5;filter:blur(.5px)"></div>
<div class="a" style="left:2254.25px;top:1746.5px;width:93px;height:9.5px;background:#444;opacity:.6;border-radius:1px;filter:blur(.9px)"></div>
<svg class="a" style="left:2282.25px;top:1799px;filter:blur(1px)" width="40" height="35" viewBox="0 0 9 8" preserveAspectRatio="none"><rect width="9" height="8" fill="#c9dadd"/><g fill="#7fa3a8"><rect x="0" y="0" width="1" height="1"/><rect x="3" y="0" width="1" height="1"/><rect x="6" y="0" width="1" height="1"/><rect x="1" y="1" width="1" height="1"/><rect x="2" y="1" width="1" height="1"/><rect x="3" y="1" width="1" height="1"/><rect x="6" y="1" width="1" height="1"/><rect x="2" y="2" width="1" height="1"/><rect x="3" y="2" width="1" height="1"/><rect x="5" y="2" width="1" height="1"/><rect x="6" y="2" width="1" height="1"/><rect x="7" y="2" width="1" height="1"/><rect x="8" y="2" width="1" height="1"/><rect x="0" y="3" width="1" height="1"/><rect x="1" y="3" width="1" height="1"/><rect x="5" y="3" width="1" height="1"/><rect x="7" y="3" width="1" height="1"/><rect x="8" y="3" width="1" height="1"/><rect x="4" y="4" width="1" height="1"/><rect x="5" y="4" width="1" height="1"/><rect x="6" y="4" width="1" height="1"/><rect x="7" y="4" width="1" height="1"/><rect x="0" y="5" width="1" height="1"/><rect x="2" y="5" width="1" height="1"/><rect x="5" y="5" width="1" height="1"/><rect x="6" y="5" width="1" height="1"/><rect x="8" y="5" width="1" height="1"/><rect x="1" y="6" width="1" height="1"/><rect x="2" y="6" width="1" height="1"/><rect x="5" y="6" width="1" height="1"/><rect x="6" y="6" width="1" height="1"/><rect x="7" y="6" width="1" height="1"/><rect x="1" y="7" width="1" height="1"/><rect x="2" y="7" width="1" height="1"/><rect x="3" y="7" width="1" height="1"/><rect x="4" y="7" width="1" height="1"/><rect x="6" y="7" width="1" height="1"/><rect x="8" y="7" width="1" height="1"/></g></svg>
<span class="t" style="left:139.29px;top:56.00px;font-size:21.37px;font-weight:normal;color:#f1d98a;font-family:'Liberation Sans', sans-serif;transform:scaleX(0.9141);">URL:</span>
<span class="t" style="left:187.83px;top:56.00px;font-size:21.37px;font-weight:normal;color:#fff;font-family:'Liberation Sans', sans-serif;transform:scaleX(1.1669);text-decoration:underline;text-decoration-thickness:2px;text-underline-offset:3px;">https://m2hyvaperftest.eltrino.io/category-2/simple-product-10231.html</span>
<span class="t" style="left:1012.07px;top:56.00px;font-size:21.37px;font-weight:normal;color:#f1d98a;font-family:'Liberation Sans', sans-serif;transform:scaleX(0.9336);">DATE:</span>
<span class="t" style="left:1073.90px;top:56.00px;font-size:21.37px;font-weight:normal;color:#fff;font-family:'Liberation Sans', sans-serif;transform:scaleX(1.0973);">12/10/2022, 13:43:52</span>
<span class="t" style="left:139.20px;top:113.60px;font-size:48.84px;font-weight:bold;color:#fff;font-family:'Liberation Sans', sans-serif;transform:scaleX(0.9544);">Webpage Performance Test Result</span>
<span class="t" style="left:138.62px;top:254.00px;font-size:23.26px;font-weight:normal;color:#f1d98a;font-family:'Liberation Sans', sans-serif;transform:scaleX(0.8814);">SETTINGS:</span>
<span class="t" style="left:256.54px;top:254.00px;font-size:23.26px;font-weight:normal;color:#fff;font-family:'Liberation Sans', sans-serif;transform:scaleX(0.9557);">MOTOG4</span>
<span class="t" style="left:424.50px;top:254.00px;font-size:23.26px;font-weight:normal;color:#fff;font-family:'Liberation Sans', sans-serif;transform:scaleX(0.9801);">v106</span>
<span class="t" style="left:511.00px;top:254.00px;font-size:23.26px;font-weight:normal;color:#fff;font-family:'Liberation Sans', sans-serif;transform:scaleX(0.9522);">4G</span>
<span class="t" style="left:625.98px;top:254.50px;font-size:23.26px;font-weight:normal;color:#fff;font-family:'Liberation Sans', sans-serif;transform:scaleX(1.0153);">Frankfurt, Germany</span>
<span class="t" style="left:868.45px;top:254.50px;font-size:23.26px;font-weight:normal;color:#fff;font-family:'Liberation Sans', sans-serif;transform:scaleX(1.0482);">More</span>
<span class="t" style="left:1010.03px;top:254.50px;font-size:23.26px;font-weight:normal;color:#fff;font-family:'Liberation Sans', sans-serif;transform:scaleX(0.9732);">Share</span>
<span class="t" style="left:139.00px;top:406.00px;font-size:30.52px;font-weight:bold;color:#1f2b3b;font-family:'Liberation Sans', sans-serif;transform:scaleX(0.9690);">View:</span>
<span class="t" style="left:257.75px;top:406.00px;font-size:30.52px;font-weight:bold;color:#1b74ba;font-family:'Liberation Sans', sans-serif;transform:scaleX(0.9740);">Performance Summary</span>
<span class="t" style="left:792.30px;top:404.00px;font-size:29.80px;font-weight:bold;color:#1f2b3b;font-family:'Liberation Sans', sans-serif;transform:scaleX(0.9432);">Tools:</span>
<span class="t" style="left:925.76px;top:411.50px;font-size:22.53px;font-weight:bold;color:#2a3c64;font-family:'Liberation Sans', sans-serif;transform:scaleX(1.0380);">Export</span>
<span class="t" style="left:1086.06px;top:409.40px;font-size:24.71px;font-weight:bold;color:#222;font-family:'Liberation Sans', sans-serif;transform:scaleX(0.9444);">Re-Run Test</span>
<span class="t" style="left:137.66px;top:579.50px;font-size:64.68px;font-weight:normal;color:#2b2b2b;font-family:'Liberation Sans', sans-serif;transform:scaleX(0.9486);-webkit-text-stroke:1.6px #fff;">Performance Summary</span>
<span class="t" style="left:139.26px;top:699.50px;font-size:32.27px;font-weight:bold;color:#2a3c64;font-family:'Liberation Sans', sans-serif;transform:scaleX(1.0433);">Opportunities &amp; Experiments</span>
<span class="t" style="left:624.00px;top:696.00px;font-size:13.81px;font-weight:bold;color:#fff;font-family:'Liberation Sans', sans-serif;transform:scaleX(0.8744);">NEW</span>
<span class="t" style="left:712.04px;top:704.80px;font-size:20.35px;font-weight:bold;color:#5b9a1e;font-family:'Liberation Sans', sans-serif;transform:scaleX(0.9559);">Explore All</span>
<span class="t" style="left:139.33px;top:799.70px;font-size:29.51px;font-weight:bold;color:#2a3c64;font-family:'Liberation Sans', sans-serif;transform:scaleX(0.9663);">Is it Quick?</span>
<span class="t" style="left:350.17px;top:800.00px;font-size:29.51px;font-weight:normal;color:#c98b22;font-family:'Liberation Sans', sans-serif;transform:scaleX(0.9166);">Not bad...</span>
<span class="t" style="left:912.64px;top:799.70px;font-size:29.51px;font-weight:bold;color:#2a3c64;font-family:'Liberation Sans', sans-serif;transform:scaleX(0.9572);">Is it Usable?</span>
<span class="t" style="left:1136.92px;top:800.00px;font-size:29.51px;font-weight:normal;color:#4a8a30;font-family:'Liberation Sans', sans-serif;transform:scaleX(0.8915);">Looks great!</span>
<span class="t" style="left:1684.03px;top:799.70px;font-size:29.51px;font-weight:bold;color:#2a3c64;font-family:'Liberation Sans', sans-serif;transform:scaleX(0.9724);">Is it Resilient?</span>
<span class="t" style="left:1935.90px;top:800.00px;font-size:29.51px;font-weight:normal;color:#4a8a30;font-family:'Liberation Sans', sans-serif;transform:scaleX(0.8998);">Looks great!</span>
<span class="t" style="left:139.60px;top:852.00px;font-size:26.60px;font-weight:normal;color:#151515;font-family:'Liberation Sans', sans-serif;transform:scaleX(0.8682);-webkit-text-stroke:0.45px #fff;">This site was quick to connect and deliver initial code. It began</span>
<span class="t" style="left:138.71px;top:886.30px;font-size:26.60px;font-weight:normal;color:#151515;font-family:'Liberation Sans', sans-serif;transform:scaleX(0.8859);-webkit-text-stroke:0.45px #fff;">rendering content very quickly. The largest contentful paint time</span>
<span class="t" style="left:140.46px;top:920.60px;font-size:26.60px;font-weight:normal;color:#151515;font-family:'Liberation Sans', sans-serif;transform:scaleX(0.8570);-webkit-text-stroke:0.45px #fff;">was good.</span>
<span class="t" style="left:912.00px;top:852.00px;font-size:26.60px;font-weight:normal;color:#151515;font-family:'Liberation Sans', sans-serif;transform:scaleX(0.8782);-webkit-text-stroke:0.45px #fff;">This site had good layout stability.It took a long time to become</span>
<span class="t" style="left:911.13px;top:886.30px;font-size:26.60px;font-weight:normal;color:#151515;font-family:'Liberation Sans', sans-serif;transform:scaleX(0.8719);-webkit-text-stroke:0.45px #fff;">interactive. HTML content was mostly generated server-side.</span>
<span class="t" style="left:1684.00px;top:852.00px;font-size:26.60px;font-weight:normal;color:#151515;font-family:'Liberation Sans', sans-serif;transform:scaleX(0.8786);-webkit-text-stroke:0.45px #fff;">This site had zero render-blocking 3rd party requests. It had no</span>
<span class="t" style="left:1684.00px;top:886.30px;font-size:26.60px;font-weight:normal;color:#151515;font-family:'Liberation Sans', sans-serif;transform:scaleX(0.8664);-webkit-text-stroke:0.45px #fff;">security issues detected. HTML generation was not overly</span>
<span class="t" style="left:1684.00px;top:920.60px;font-size:26.60px;font-weight:normal;color:#151515;font-family:'Liberation Sans', sans-serif;transform:scaleX(0.8483);-webkit-text-stroke:0.45px #fff;">JavaScript-dependent</span>
<span class="t" style="left:138.08px;top:1216.20px;font-size:50.29px;font-weight:bold;color:#2a3c64;font-family:'Liberation Sans', sans-serif;transform:scaleX(0.9593);">Observed Metrics</span>
<span class="t" style="left:554.14px;top:1236.00px;font-size:27.62px;font-weight:normal;color:#555;font-family:'Liberation Sans', sans-serif;transform:scaleX(0.8636);">(Based on Median Run by:</span>
<span class="t" style="left:867.14px;top:1236.00px;font-size:27.62px;font-weight:normal;color:#555;font-family:'Liberation Sans', sans-serif;transform:scaleX(0.8578);">Speed Index)</span>
<span class="t" style="left:2052.93px;top:1248.60px;font-size:23.69px;font-weight:bold;color:#333;font-family:'Liberation Sans', sans-serif;transform:scaleX(1.0705);">Note:</span>
<span class="t" style="left:2121.96px;top:1248.60px;font-size:23.69px;font-weight:normal;color:#333;font-family:'Liberation Sans', sans-serif;transform:scaleX(1.0391);">Metrics offered will vary</span>
<span class="t" style="left:138.30px;top:1333.60px;font-size:27.62px;font-weight:normal;color:#26303f;font-family:'Liberation Sans', sans-serif;transform:scaleX(0.8523);">FIRST VIEW (</span>
<span class="t" style="left:283.06px;top:1333.60px;font-size:27.62px;font-weight:normal;color:#1a6ea8;font-family:'Liberation Sans', sans-serif;transform:scaleX(0.9687);text-decoration:underline;text-decoration-thickness:2px;text-underline-offset:3px;">RUN 1</span>
<span class="t" style="left:361.00px;top:1333.60px;font-size:27.62px;font-weight:normal;color:#26303f;font-family:'Liberation Sans', sans-serif;transform:scaleX(1.0000);">)</span>
<span class="t" style="left:139.45px;top:1399.50px;font-size:22.53px;font-weight:bold;color:#666;font-family:'Liberation Sans', sans-serif;transform:scaleX(1.0506);">First Byte</span>
<span class="t" style="left:408.75px;top:1399.50px;font-size:22.53px;font-weight:bold;color:#666;font-family:'Liberation Sans', sans-serif;transform:scaleX(1.0656);">Start Render</span>
<span class="t" style="left:717.84px;top:1399.50px;font-size:22.53px;font-weight:bold;color:#666;font-family:'Liberation Sans', sans-serif;transform:scaleX(0.9088);">FCP</span>
<span class="t" style="left:1027.50px;top:1399.50px;font-size:22.53px;font-weight:bold;color:#666;font-family:'Liberation Sans', sans-serif;transform:scaleX(1.0405);">Speed Index</span>
<span class="t" style="left:1336.56px;top:1399.50px;font-size:22.53px;font-weight:bold;color:#666;font-family:'Liberation Sans', sans-serif;transform:scaleX(0.9372);">LCP</span>
<span class="t" style="left:1646.00px;top:1399.50px;font-size:22.53px;font-weight:bold;color:#666;font-family:'Liberation Sans', sans-serif;transform:scaleX(0.8886);">CLS</span>
<span class="t" style="left:1838.00px;top:1399.50px;font-size:22.53px;font-weight:bold;color:#666;font-family:'Liberation Sans', sans-serif;transform:scaleX(0.9543);">TBT</span>
<span class="t" style="left:2158.75px;top:1399.50px;font-size:22.53px;font-weight:bold;color:#666;font-family:'Liberation Sans', sans-serif;transform:scaleX(1.0594);">Total Bytes</span>
<span class="t" style="left:138.08px;top:1435.75px;font-size:74.14px;font-weight:bold;color:#2a3c64;font-family:'Liberation Sans', sans-serif;transform:scaleX(0.9833);-webkit-text-stroke:2px #2a3c64;">.892</span>
<span class="t" style="left:286.87px;top:1454.50px;font-size:52.24px;font-weight:normal;color:#2a3c64;font-family:'Liberation Sans', sans-serif;transform:scaleX(0.7333);">s</span>
<span class="t" style="left:408.11px;top:1435.75px;font-size:74.14px;font-weight:bold;color:#2a3c64;font-family:'Liberation Sans', sans-serif;transform:scaleX(0.9734);-webkit-text-stroke:2px #2a3c64;">1.300</span>
<span class="t" style="left:595.23px;top:1454.50px;font-size:52.24px;font-weight:normal;color:#2a3c64;font-family:'Liberation Sans', sans-serif;transform:scaleX(0.7708);">s</span>
<span class="t" style="left:718.14px;top:1435.75px;font-size:74.14px;font-weight:bold;color:#2a3c64;font-family:'Liberation Sans', sans-serif;transform:scaleX(0.9650);-webkit-text-stroke:2px #2a3c64;">1.248</span>
<span class="t" style="left:905.25px;top:1454.50px;font-size:52.24px;font-weight:normal;color:#2a3c64;font-family:'Liberation Sans', sans-serif;transform:scaleX(0.7500);">s</span>
<span class="t" style="left:1027.73px;top:1435.75px;font-size:74.14px;font-weight:bold;color:#2a3c64;font-family:'Liberation Sans', sans-serif;transform:scaleX(0.9430);-webkit-text-stroke:2px #2a3c64;">1.455</span>
<span class="t" style="left:1214.22px;top:1454.50px;font-size:52.24px;font-weight:normal;color:#2a3c64;font-family:'Liberation Sans', sans-serif;transform:scaleX(0.7812);">s</span>
<span class="t" style="left:1335.84px;top:1435.75px;font-size:74.14px;font-weight:bold;color:#6aa51f;font-family:'Liberation Sans', sans-serif;transform:scaleX(0.9776);-webkit-text-stroke:2px #6aa51f;">1.450</span>
<span class="t" style="left:1524.25px;top:1454.50px;font-size:52.24px;font-weight:normal;color:#6aa51f;font-family:'Liberation Sans', sans-serif;transform:scaleX(0.7500);">s</span>
<span class="t" style="left:1646.05px;top:1435.75px;font-size:74.14px;font-weight:bold;color:#6aa51f;font-family:'Liberation Sans', sans-serif;transform:scaleX(0.9730);-webkit-text-stroke:2px #6aa51f;">0</span>
<span class="t" style="left:1886.83px;top:1435.75px;font-size:74.14px;font-weight:bold;color:#6aa51f;font-family:'Liberation Sans', sans-serif;transform:scaleX(0.9833);-webkit-text-stroke:2px #6aa51f;">.059</span>
<span class="t" style="left:2035.21px;top:1454.50px;font-size:52.24px;font-weight:normal;color:#6aa51f;font-family:'Liberation Sans', sans-serif;transform:scaleX(0.7917);">s</span>
<span class="t" style="left:2158.15px;top:1435.75px;font-size:74.14px;font-weight:bold;color:#2a3c64;font-family:'Liberation Sans', sans-serif;transform:scaleX(0.9627);-webkit-text-stroke:2px #2a3c64;">144</span>
<span class="t" style="left:2285.07px;top:1465.50px;font-size:40.12px;font-weight:normal;color:#2a3c64;font-family:'Liberation Sans', sans-serif;transform:scaleX(0.8102);">KB</span>
<span class="t" style="left:1838.64px;top:1445.50px;font-size:63.39px;font-weight:bold;color:#6aa51f;font-family:'Liberation Sans', sans-serif;transform:scaleX(0.8636);">≥</span>
<span class="t" style="left:139.50px;top:1557.25px;font-size:23.62px;font-weight:bold;color:#666;font-family:'Liberation Sans', sans-serif;transform:scaleX(0.9710);">Visual Page Loading Process</span>
<span class="t" style="left:465.00px;top:1557.25px;font-size:23.62px;font-weight:normal;color:#666;font-family:'Liberation Sans', sans-serif;transform:scaleX(1.0000);">(</span>
<span class="t" style="left:473.99px;top:1557.25px;font-size:23.62px;font-weight:normal;color:#1a6ea8;font-family:'Liberation Sans', sans-serif;transform:scaleX(1.0137);text-decoration:underline;text-decoration-thickness:2px;text-underline-offset:3px;">Explore</span>
<span class="t" style="left:557.00px;top:1557.25px;font-size:23.62px;font-weight:normal;color:#666;font-family:'Liberation Sans', sans-serif;transform:scaleX(1.0000);">)</span>
<span class="t" style="left:198.55px;top:1626.00px;font-size:41.85px;font-weight:normal;color:#fff;font-family:'Liberation Mono', monospace;transform:scaleX(0.9021);-webkit-text-stroke:1px #2a3c64;">0.0s</span>
<span class="t" style="left:335.45px;top:1626.00px;font-size:41.85px;font-weight:normal;color:#fff;font-family:'Liberation Mono', monospace;transform:scaleX(0.9021);-webkit-text-stroke:1px #2a3c64;">0.1s</span>
<span class="t" style="left:472.35px;top:1626.00px;font-size:41.85px;font-weight:normal;color:#fff;font-family:'Liberation Mono', monospace;transform:scaleX(0.9021);-webkit-text-stroke:1px #2a3c64;">0.2s</span>
<span class="t" style="left:609.25px;top:1626.00px;font-size:41.85px;font-weight:normal;color:#fff;font-family:'Liberation Mono', monospace;transform:scaleX(0.9021);-webkit-text-stroke:1px #2a3c64;">0.3s</span>
<span class="t" style="left:746.15px;top:1626.00px;font-size:41.85px;font-weight:normal;color:#fff;font-family:'Liberation Mono', monospace;transform:scaleX(0.9021);-webkit-text-stroke:1px #2a3c64;">0.4s</span>
<span class="t" style="left:883.05px;top:1626.00px;font-size:41.85px;font-weight:normal;color:#fff;font-family:'Liberation Mono', monospace;transform:scaleX(0.9021);-webkit-text-stroke:1px #2a3c64;">0.5s</span>
<span class="t" style="left:1019.95px;top:1626.00px;font-size:41.85px;font-weight:normal;color:#fff;font-family:'Liberation Mono', monospace;transform:scaleX(0.9021);-webkit-text-stroke:1px #2a3c64;">0.6s</span>
<span class="t" style="left:1156.85px;top:1626.00px;font-size:41.85px;font-weight:normal;color:#fff;font-family:'Liberation Mono', monospace;transform:scaleX(0.9021);-webkit-text-stroke:1px #2a3c64;">0.7s</span>
<span class="t" style="left:1293.75px;top:1626.00px;font-size:41.85px;font-weight:normal;color:#fff;font-family:'Liberation Mono', monospace;transform:scaleX(0.9021);-webkit-text-stroke:1px #2a3c64;">0.8s</span>
<span class="t" style="left:1430.65px;top:1626.00px;font-size:41.85px;font-weight:normal;color:#fff;font-family:'Liberation Mono', monospace;transform:scaleX(0.9021);-webkit-text-stroke:1px #2a3c64;">0.9s</span>
<span class="t" style="left:1566.61px;top:1626.00px;font-size:41.85px;font-weight:normal;color:#fff;font-family:'Liberation Mono', monospace;transform:scaleX(0.9117);-webkit-text-stroke:1px #2a3c64;">1.0s</span>
<span class="t" style="left:1703.51px;top:1626.00px;font-size:41.85px;font-weight:normal;color:#fff;font-family:'Liberation Mono', monospace;transform:scaleX(0.9117);-webkit-text-stroke:1px #2a3c64;">1.1s</span>
<span class="t" style="left:1840.41px;top:1626.00px;font-size:41.85px;font-weight:normal;color:#fff;font-family:'Liberation Mono', monospace;transform:scaleX(0.9117);-webkit-text-stroke:1px #2a3c64;">1.2s</span>
<span class="t" style="left:1977.31px;top:1626.00px;font-size:41.85px;font-weight:normal;color:#fff;font-family:'Liberation Mono', monospace;transform:scaleX(0.9117);-webkit-text-stroke:1px #2a3c64;">1.3s</span>
<span class="t" style="left:2114.21px;top:1626.00px;font-size:41.85px;font-weight:normal;color:#fff;font-family:'Liberation Mono', monospace;transform:scaleX(0.9117);-webkit-text-stroke:1px #2a3c64;">1.4s</span>
<span class="t" style="left:2251.11px;top:1626.00px;font-size:41.85px;font-weight:normal;color:#fff;font-family:'Liberation Mono', monospace;transform:scaleX(0.9117);-webkit-text-stroke:1px #2a3c64;">1.5s</span>
<span class="t" style="left:1964.40px;top:51.00px;font-size:40.70px;font-weight:normal;color:#555;font-family:'Liberation Sans', sans-serif;transform:scaleX(0.8653);-webkit-text-stroke:1px #fff;">Magento</span>
<span class="t" style="left:2103.00px;top:58.00px;font-size:7.27px;font-weight:normal;color:#888;font-family:'Liberation Sans', sans-serif;transform:scaleX(1.0000);">®</span>
<span class="t" style="left:1837.74px;top:196.00px;font-size:15.12px;font-weight:normal;color:#222;font-family:'Liberation Sans', sans-serif;transform:scaleX(0.9588);">Home</span>
<span class="t" style="left:1888.00px;top:196.00px;font-size:15.12px;font-weight:normal;color:#666;font-family:'Liberation Sans', sans-serif;transform:scaleX(1.0000);">/</span>
<span class="t" style="left:1900.00px;top:196.00px;font-size:15.12px;font-weight:normal;color:#222;font-family:'Liberation Sans', sans-serif;transform:scaleX(1.0339);">Category 2</span>
<span class="t" style="left:1986.00px;top:196.00px;font-size:15.12px;font-weight:normal;color:#666;font-family:'Liberation Sans', sans-serif;transform:scaleX(1.0000);">/</span>
<span class="t" style="left:1998.00px;top:196.00px;font-size:15.12px;font-weight:normal;color:#555;font-family:'Liberation Sans', sans-serif;transform:scaleX(1.0050);">Simple Product 10231</span>
<span class="t" style="left:1838.06px;top:268.50px;font-size:34.74px;font-weight:bold;color:#1a1a1a;font-family:'Liberation Sans', sans-serif;transform:scaleX(0.9369);">Simple Product 10231</span>
<span class="t" style="left:201.05px;top:994.80px;font-size:16.05px;font-weight:bold;color:#222;font-family:'Liberation Sans', sans-serif;transform:scaleX(1.0000);-webkit-text-stroke:0.5px #222;">2</span>
<span class="t" style="left:308.05px;top:994.80px;font-size:16.05px;font-weight:bold;color:#222;font-family:'Liberation Sans', sans-serif;transform:scaleX(1.0000);-webkit-text-stroke:0.5px #222;">2</span>
<span class="t" style="left:461.95px;top:994.80px;font-size:16.05px;font-weight:bold;color:#222;font-family:'Liberation Sans', sans-serif;transform:scaleX(1.0000);-webkit-text-stroke:0.5px #222;">3</span>
<span class="t" style="left:404.64px;top:993.10px;font-size:16.13px;font-weight:bold;color:#f4ffe6;font-family:'Liberation Sans', sans-serif;transform:scaleX(0.9572);">Pro</span>
<span class="t" style="left:973.55px;top:994.80px;font-size:16.05px;font-weight:bold;color:#222;font-family:'Liberation Sans', sans-serif;transform:scaleX(1.0000);-webkit-text-stroke:0.5px #222;">0</span>
<span class="t" style="left:1080.55px;top:994.80px;font-size:16.05px;font-weight:bold;color:#222;font-family:'Liberation Sans', sans-serif;transform:scaleX(1.0000);-webkit-text-stroke:0.5px #222;">0</span>
<span class="t" style="left:1234.45px;top:994.80px;font-size:16.05px;font-weight:bold;color:#222;font-family:'Liberation Sans', sans-serif;transform:scaleX(1.0000);-webkit-text-stroke:0.5px #222;">0</span>
<span class="t" style="left:1177.14px;top:993.10px;font-size:16.13px;font-weight:bold;color:#f4ffe6;font-family:'Liberation Sans', sans-serif;transform:scaleX(0.9572);">Pro</span>
<span class="t" style="left:1746.05px;top:994.80px;font-size:16.05px;font-weight:bold;color:#222;font-family:'Liberation Sans', sans-serif;transform:scaleX(1.0000);-webkit-text-stroke:0.5px #222;">0</span>
<span class="t" style="left:1853.05px;top:994.80px;font-size:16.05px;font-weight:bold;color:#222;font-family:'Liberation Sans', sans-serif;transform:scaleX(1.0000);-webkit-text-stroke:0.5px #222;">0</span>
<span class="t" style="left:2006.95px;top:994.80px;font-size:16.05px;font-weight:bold;color:#222;font-family:'Liberation Sans', sans-serif;transform:scaleX(1.0000);-webkit-text-stroke:0.5px #222;">0</span>
<span class="t" style="left:1949.64px;top:993.10px;font-size:16.13px;font-weight:bold;color:#f4ffe6;font-family:'Liberation Sans', sans-serif;transform:scaleX(0.9572);">Pro</span>
</body></html>
